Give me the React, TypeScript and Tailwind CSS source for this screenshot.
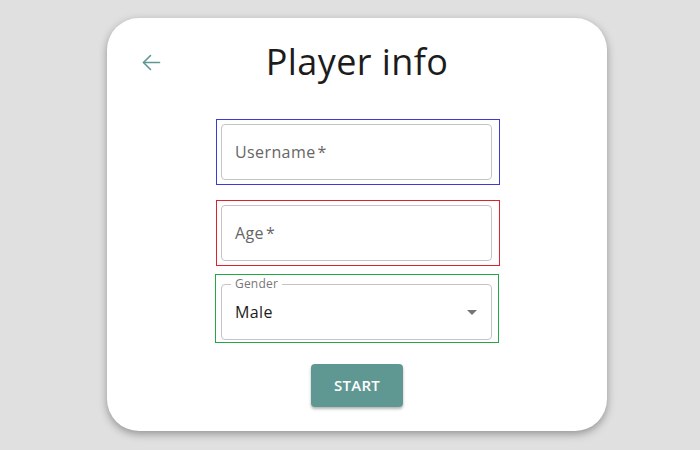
import React from "react";

export default function App() {
  const font = { fontFamily: '"Open Sans", "Noto Sans", sans-serif' };
  return (
    <div className="w-[700px] h-[450px] bg-[#e0e0e0] flex justify-center pt-[18px] pl-[14px]" style={font}>
      <div className="w-[500px] h-[413px] bg-white rounded-[32px] shadow-[0_3px_8px_rgba(0,0,0,0.35)] flex flex-col items-center relative">
        <button className="absolute left-[35px] top-[36px] w-[19px] h-[17px] flex items-center justify-center text-[#5f9893]">
          <svg width="19" height="17" viewBox="0 0 19 17" fill="none" stroke="currentColor" strokeWidth="1.6" strokeLinecap="round" strokeLinejoin="round">
            <path d="M1.5 8.5 H17.5" />
            <path d="M8.5 1.5 L1.5 8.5 L8.5 15.5" />
          </svg>
        </button>
        <h1 className="mt-[22px] text-[36px] leading-[44px] text-[#1c1c1c] tracking-[0.4px]">Player info</h1>
        <div className="mt-[35px] ml-[2px] flex flex-col items-center">
          <div className="w-[284px] border border-[#3b3bd6] p-[4px]">
            <div className="w-[271px] h-[56px] border border-[#c4c4c4] rounded-[4px] flex items-center px-[13px] text-[16px] text-[#666] tracking-[0.4px]">
              Username<span className="ml-[2px]">*</span>
            </div>
          </div>
          <div className="mt-[15px] w-[284px] border border-[#e0202a] p-[4px] h-[66px]">
            <div className="w-[271px] h-[56px] border border-[#c4c4c4] rounded-[4px] flex items-center px-[13px] text-[16px] text-[#666] tracking-[0.4px]">
              Age<span className="ml-[2px]">*</span>
            </div>
          </div>
          <div className="mt-[8px] -ml-[2px] w-[284px] h-[69px] border border-[#22a844] pt-[9px] pl-[5px]">
            <div className="relative w-[271px] h-[56px] border border-[#c4c4c4] rounded-[4px] flex items-center pl-[13px] pr-[14px] text-[16px] text-[#1c1c1c] tracking-[0.4px]">
              <span className="absolute -top-[8px] left-[9px] bg-white px-[4px] text-[12px] leading-[14px] text-[#777] tracking-[0.2px]">Gender</span>
              <span className="flex-1">Male</span>
              <svg width="10" height="5" viewBox="0 0 10 5" className="text-[#757575]" fill="currentColor">
                <path d="M0 0 L10 0 L5 5 Z" />
              </svg>
            </div>
          </div>
          <button className="mt-[21px] -ml-[2px] w-[92px] h-[43px] bg-[#5f9893] rounded-[4px] text-white text-[15px] font-semibold tracking-[0.3px] shadow-[0_2px_3px_rgba(0,0,0,0.3)]">
            START
          </button>
        </div>
      </div>
    </div>
  );
}
